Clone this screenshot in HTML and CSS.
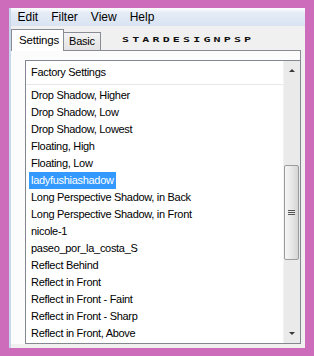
FILE: index.html
```html
<!DOCTYPE html>
<html lang="en">

<head>
  <meta charset="UTF-8" />
  <title>Presets</title>
  <link rel="stylesheet" href="styles.css">
</head>

<body>
  <div class="window">
    <nav class="menubar">
      <span>Edit</span>
      <span>Filter</span>
      <span>View</span>
      <span>Help</span>
    </nav>

    <div class="tabstrip">
      <div class="tab active">Settings</div>
      <div class="tab">Basic</div>
      <div class="brand">STARDESIGNPSP</div>
    </div>

    <div class="panel">
      <div class="listbox">
        <div class="list">
          <div class="list-header">Factory Settings</div>
          <ul class="items">
            <li><span>Drop Shadow, Higher</span></li>
            <li><span>Drop Shadow, Low</span></li>
            <li><span>Drop Shadow, Lowest</span></li>
            <li><span>Floating, High</span></li>
            <li><span>Floating, Low</span></li>
            <li class="selected"><span>ladyfushiashadow</span></li>
            <li><span>Long Perspective Shadow, in Back</span></li>
            <li><span>Long Perspective Shadow, in Front</span></li>
            <li><span>nicole-1</span></li>
            <li><span>paseo_por_la_costa_S</span></li>
            <li><span>Reflect Behind</span></li>
            <li><span>Reflect in Front</span></li>
            <li><span>Reflect in Front - Faint</span></li>
            <li><span>Reflect in Front - Sharp</span></li>
            <li><span>Reflect in Front, Above</span></li>
          </ul>
        </div>

        <div class="scrollbar">
          <div class="arrow up"></div>
          <div class="track">
            <div class="thumb"><span class="grip"></span></div>
          </div>
          <div class="arrow down"></div>
        </div>
      </div>
    </div>
  </div>
</body>

</html>
```

FILE: styles.css
```css
* {
  box-sizing: border-box;
}

body {
  margin: 0;
  width: 314px;
  height: 356px;
  background-color: #cc6cbb;
  font-family: "Liberation Sans", Arial, sans-serif;
  color: #000;
  overflow: hidden;
}

.window {
  margin: 8px 9px;
  width: 296px;
  height: 340px;
  background: #f0f0f0;
  border-left: 2px solid #c6d6eb;
}

/* Menu */
.menubar {
  display: flex;
  height: 18px;
  background: linear-gradient(#fbfcfe, #e4ebf6 30%, #d9e3f2);
  font-size: 12px;
  line-height: 18px;
}

.menubar span {
  padding: 0 6.5px;
}

/* Tabs */
.tabstrip {
  display: flex;
  align-items: flex-end;
  height: 24px;
}

.tab {
  height: 18px;
  padding: 0 5px;
  font-size: 11px;
  line-height: 17px;
  letter-spacing: -0.2px;
  border: 1px solid #898c95;
  border-bottom: none;
  border-left: none;
  background: linear-gradient(#f3f3f3, #e3e3e3);
}

.tab.active {
  height: 22px;
  width: 53px;
  margin-bottom: -1px;
  padding: 0 7px;
  line-height: 20px;
  font-size: 11.5px;
  border-left: 1px solid #898c95;
  background: #fff;
}

.brand {
  align-self: center;
  margin: 2px 0 0 21px;
  font-family: "DejaVu Sans Mono", monospace;
  font-size: 8px;
  font-weight: bold;
  letter-spacing: 2.2px;
  color: #111;
  transform: scale(1.45, 0.85);
  transform-origin: left center;
}

/* Panel */
.panel {
  width: 290px;
  padding: 9px 0 0 14px;
  background: #fcfcfc;
  border-top: 1px solid #898c95;
  border-right: 1px solid #898c95;
}

.listbox {
  display: flex;
  height: 284px;
  margin-right: -1px;
  background: #fff;
  border: 1px solid #828790;
}

.list {
  flex: 1;
  min-width: 0;
}

.list-header {
  height: 24px;
  padding-left: 5px;
  font-size: 11px;
  line-height: 23px;
  letter-spacing: -0.3px;
  border-bottom: 1px solid #e8e8e8;
}

.items {
  list-style: none;
  margin: 0;
  padding: 2px 0 0 3px;
  font-size: 11px;
  letter-spacing: -0.3px;
}

.items li {
  height: 17px;
  line-height: 17px;
  white-space: nowrap;
}

.items span {
  display: inline-block;
  padding: 0 2px;
}

.items .selected span {
  background: #3399ff;
  color: #fff;
}

/* Scrollbar */
.scrollbar {
  display: flex;
  flex-direction: column;
  width: 17px;
  background: #eaeaea;
  border-left: 1px solid #f2f2f2;
}

.arrow {
  height: 19px;
  display: flex;
  align-items: center;
  justify-content: center;
}

.arrow::before {
  content: "";
  border-left: 3px solid transparent;
  border-right: 3px solid transparent;
}

.arrow.up::before {
  border-bottom: 3px solid #3a3a3a;
}

.arrow.down::before {
  border-top: 3px solid #3a3a3a;
}

.track {
  flex: 1;
}

.thumb {
  display: flex;
  align-items: center;
  justify-content: center;
  height: 95px;
  margin: 85px 1px 0 0;
  border: 1px solid #9b9b9b;
  border-radius: 2px;
  background: linear-gradient(90deg, #f6f6f6, #e4e4e4 60%, #d4d4d4);
}

.grip {
  width: 7px;
  height: 5px;
  border-top: 1px solid #555;
  border-bottom: 1px solid #555;
  background: linear-gradient(transparent 1px, #555 1px, #555 2px, transparent 2px);
}
```
